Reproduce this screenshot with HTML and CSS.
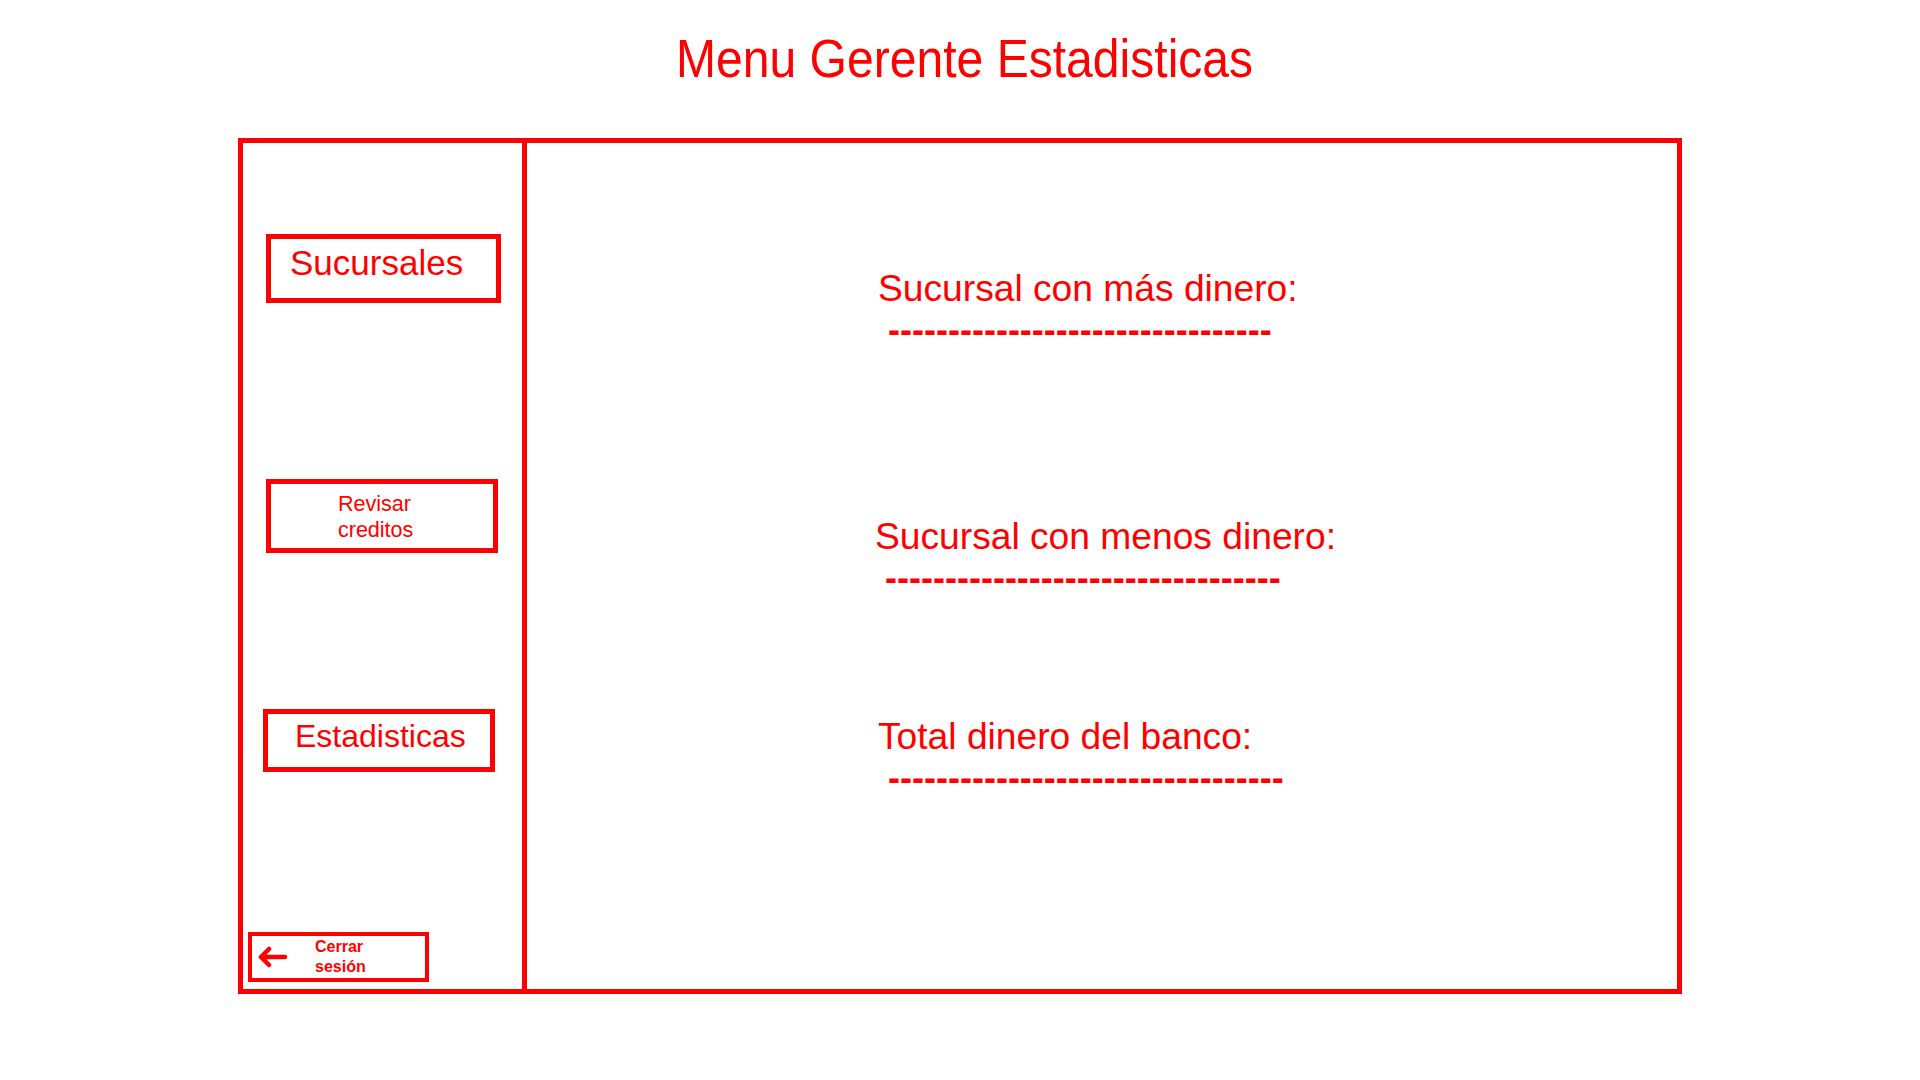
FILE: index.html
```html
<!DOCTYPE html>
<html lang="es">
<head>
  <meta charset="UTF-8">
  <meta name="viewport" content="width=device-width, initial-scale=1.0">
  <title>Menu Gerente Estadisticas</title>
  <link rel="stylesheet" href="styles.css">
</head>
<body>

  <!-- Titulo -->
  <div class="header">
    <h1 class="title">Menu Gerente Estadisticas</h1>
  </div>

  <!-- Marco principal -->
  <div class="frame">

    <!-- Menu lateral -->
    <div class="sidebar">
      <button class="menu-btn btn-sucursales">Sucursales</button>
      <button class="menu-btn btn-creditos">Revisar<br>creditos</button>
      <button class="menu-btn btn-estadisticas">Estadisticas</button>
      <button class="menu-btn btn-logout">
        <svg class="logout-icon" width="32" height="22" viewBox="0 0 32 22">
          <path d="M29 11 H5 M13 3 L5 11 L13 19" fill="none" stroke="#ff0000" stroke-width="4.5" stroke-linecap="round" stroke-linejoin="round"/>
        </svg>
        <span class="logout-text">Cerrar<br>sesión</span>
      </button>
    </div>

    <!-- Estadisticas -->
    <div class="content">
      <div class="stat stat-max">
        <div class="stat-label">Sucursal con más dinero:</div>
        <div class="stat-value">&nbsp;--------------------------------</div>
      </div>
      <div class="stat stat-min">
        <div class="stat-label">Sucursal con menos dinero:</div>
        <div class="stat-value">&nbsp;---------------------------------</div>
      </div>
      <div class="stat stat-total">
        <div class="stat-label">Total dinero del banco:</div>
        <div class="stat-value">&nbsp;---------------------------------</div>
      </div>
    </div>

  </div>

</body>
</html>
```

FILE: styles.css
```css
* {
  margin: 0;
  padding: 0;
  box-sizing: border-box;
}

body {
  font-family: "Liberation Sans", Arial, sans-serif;
  color: #ff0000;
  background-color: #fff;
  width: 1920px;
  height: 1080px;
  overflow: hidden;
}

/* Titulo */
.header {
  padding-top: 29px;
  padding-left: 676px;
  height: 138px;
}

/* fuente algo estrecha */
.title {
  display: inline-block;
  font-weight: normal;
  font-size: 53px;
  line-height: 60px;
  white-space: nowrap;
  transform: scaleX(0.907);
  transform-origin: left top;
}

/* Marco */
.frame {
  margin-left: 238px;
  width: 1444px;
  height: 856px;
  border: 5px solid #ff0000;
  display: flex;
}

/* Menu lateral */
.sidebar {
  width: 284px;
  border-right: 5px solid #ff0000;
  display: flex;
  flex-direction: column;
  align-items: flex-start;
}

.menu-btn {
  font-family: "Liberation Sans", Arial, sans-serif;
  color: #ff0000;
  background-color: #fff;
  border: 5px solid #ff0000;
  text-align: left;
  display: flex;
  cursor: pointer;
}

.btn-sucursales {
  margin-top: 91px;
  margin-left: 23px;
  width: 235px;
  height: 69px;
  font-size: 35px;
  line-height: 40px;
  padding: 4px 0 0 19px;
  align-items: flex-start;
}

.btn-creditos {
  margin-top: 176px;
  margin-left: 23px;
  width: 232px;
  height: 74px;
  font-size: 21.5px;
  line-height: 26px;
  padding: 2px 0 0 67px;
  align-items: center;
}

.btn-estadisticas {
  margin-top: 156px;
  margin-left: 20px;
  width: 232px;
  height: 63px;
  font-size: 32px;
  line-height: 37px;
  padding: 4px 0 0 27px;
  align-items: flex-start;
}

.btn-logout {
  margin-top: auto;
  margin-bottom: 7px;
  margin-left: 5px;
  width: 181px;
  height: 50px;
  border-width: 4.5px;
  padding-left: 4px;
  align-items: center;
}

.logout-icon {
  display: block;
  flex-shrink: 0;
}

.logout-text {
  margin-left: 27px;
  font-size: 16px;
  font-weight: bold;
  line-height: 20px;
}

/* Contenido */
.content {
  flex-grow: 1;
  display: flex;
  flex-direction: column;
  padding-left: 351px;
}

.stat-label {
  font-size: 37.2px;
  line-height: 42px;
  white-space: nowrap;
}

.stat-value {
  font-size: 36px;
  font-weight: bold;
  line-height: 42px;
  white-space: nowrap;
}

.stat-max {
  margin-top: 124px;
}

.stat-min {
  margin-top: 164px;
  margin-left: -3px;
}

.stat-total {
  margin-top: 116px;
}
```
